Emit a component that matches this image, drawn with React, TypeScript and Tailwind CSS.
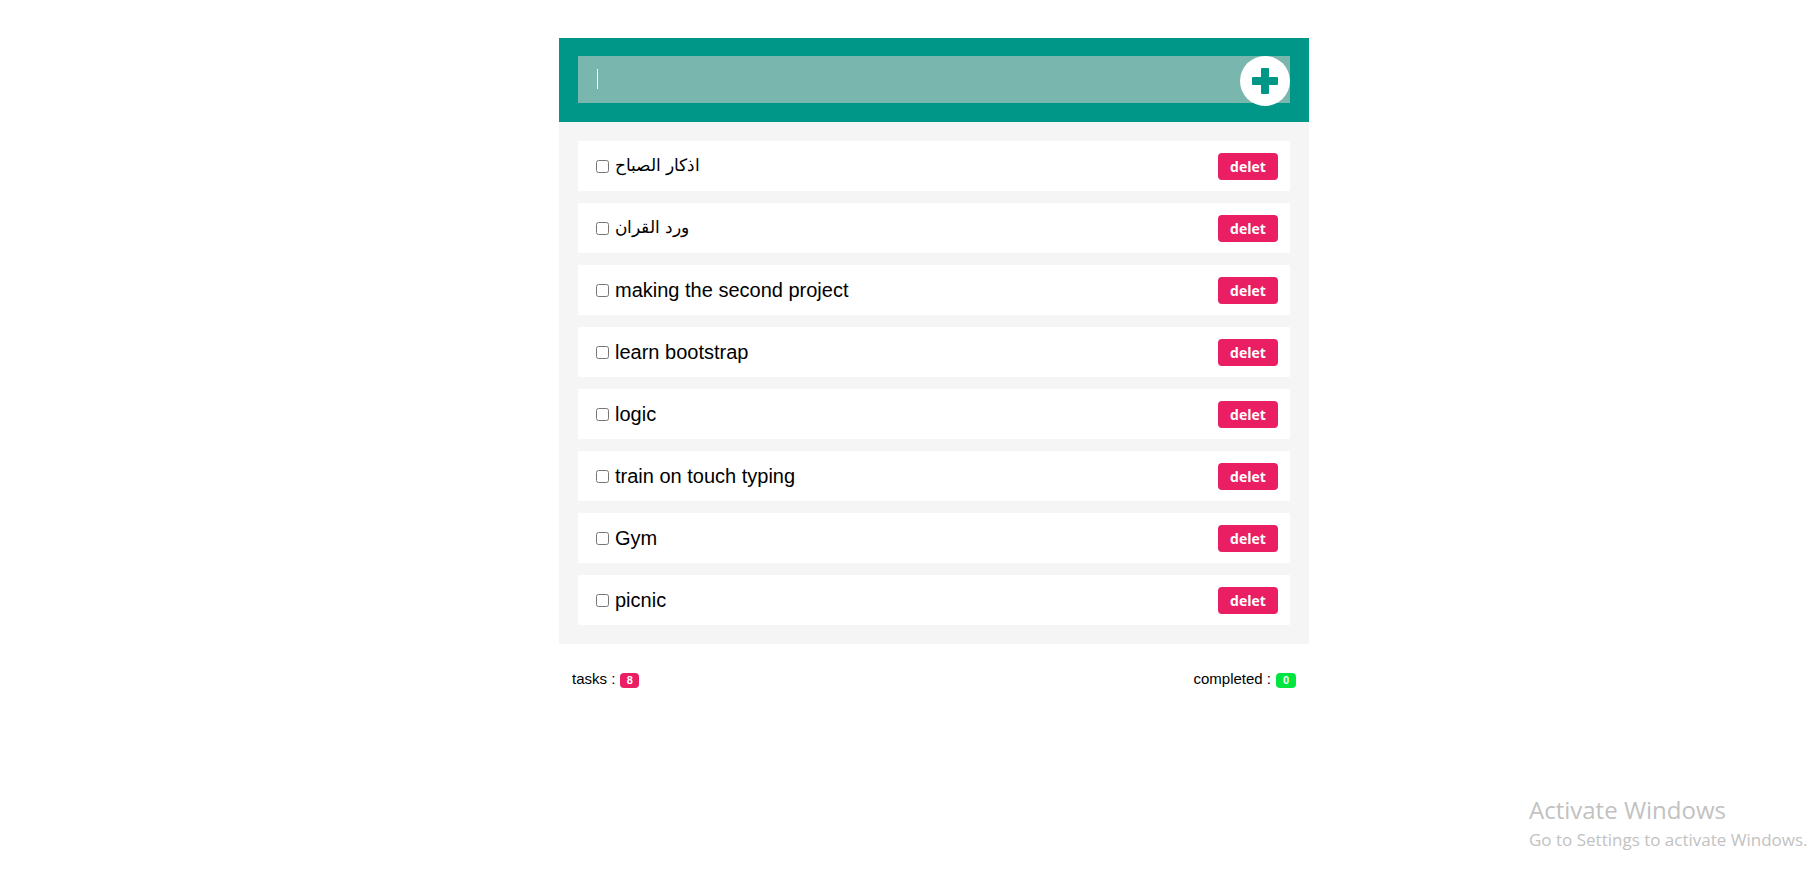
import React from "react";

const tasks = [
  "اذكار الصباح",
  "ورد القران",
  "making the second project",
  "learn bootstrap",
  "logic",
  "train on touch typing",
  "Gym",
  "picnic",
];

const isArabic = (s: string) => /[\u0600-\u06FF]/.test(s);

function PlusIcon() {
  return (
    <svg width="26" height="26" viewBox="0 0 26 26" fill="#009688">
      <rect x="0" y="9" width="26" height="8" rx="1" />
      <rect x="9" y="0" width="8" height="26" rx="1" />
    </svg>
  );
}

function TaskRow({ title }: { title: string }) {
  return (
    <li className="flex h-[50px] items-center justify-between bg-white pl-[18px] pr-[12px]">
      <label className="flex items-center">
        <input type="checkbox" className="m-0 h-[13px] w-[13px]" />
        <span
          className={
            isArabic(title)
              ? "ml-[6px] text-[17px] leading-[24px] text-black"
              : "ml-[6px] text-[20px] leading-[24px] text-black"
          }
        >
          {title}
        </span>
      </label>
      <button className="h-[27px] w-[60px] rounded-[4px] bg-[#e91e63] font-['Open_Sans',sans-serif] text-[14px] font-bold leading-[27px] text-white">
        delet
      </button>
    </li>
  );
}

export default function App() {
  const completed = 0;
  return (
    <div className="relative min-h-screen bg-white font-['Liberation_Sans',Arial,sans-serif]">
      <div className="flex justify-center pl-[48px] pt-[38px]">
        <div className="w-[750px]">
          <div className="bg-[#009688] px-[19px] pb-[19px] pt-[18px]">
            <div className="relative h-[47px]">
              <input
                type="text"
                className="h-[47px] w-full bg-[#79b7ae] pl-[19px] pr-[60px] text-[18px] text-white outline-none caret-transparent"
              />
              <span className="absolute left-[19px] top-[13px] h-[20px] w-px bg-white" />
              <button className="absolute right-0 top-0 flex h-[50px] w-[50px] items-center justify-center rounded-full bg-white">
                <PlusIcon />
              </button>
            </div>
          </div>

          <ul className="flex flex-col gap-[12px] bg-[#f5f5f5] p-[19px]">
            {tasks.map((t) => (
              <TaskRow key={t} title={t} />
            ))}
          </ul>

          <div className="flex items-start justify-between px-[13px] pt-[27px] text-[15px] leading-[15px] text-black">
            <div className="flex items-start">
              <span>tasks :</span>
              <span className="ml-[5px] mt-[2px] h-[15px] w-[19px] rounded-[4px] bg-[#e91e63] text-center text-[11px] font-bold leading-[15px] text-white">
                {tasks.length}
              </span>
            </div>
            <div className="flex items-start">
              <span>completed :</span>
              <span className="ml-[5px] mt-[2px] h-[15px] w-[20px] rounded-[4px] bg-[#00e640] text-center text-[11px] font-bold leading-[15px] text-white">
                {completed}
              </span>
            </div>
          </div>
        </div>
      </div>

      <div className="absolute left-[1529px] top-[794px] font-['Open_Sans',sans-serif] text-[#c2c2c2]">
        <div className="text-[24px] leading-[32px]">Activate Windows</div>
        <div className="mt-[3px] text-[17px] leading-[22px]">Go to Settings to activate Windows.</div>
      </div>
    </div>
  );
}
